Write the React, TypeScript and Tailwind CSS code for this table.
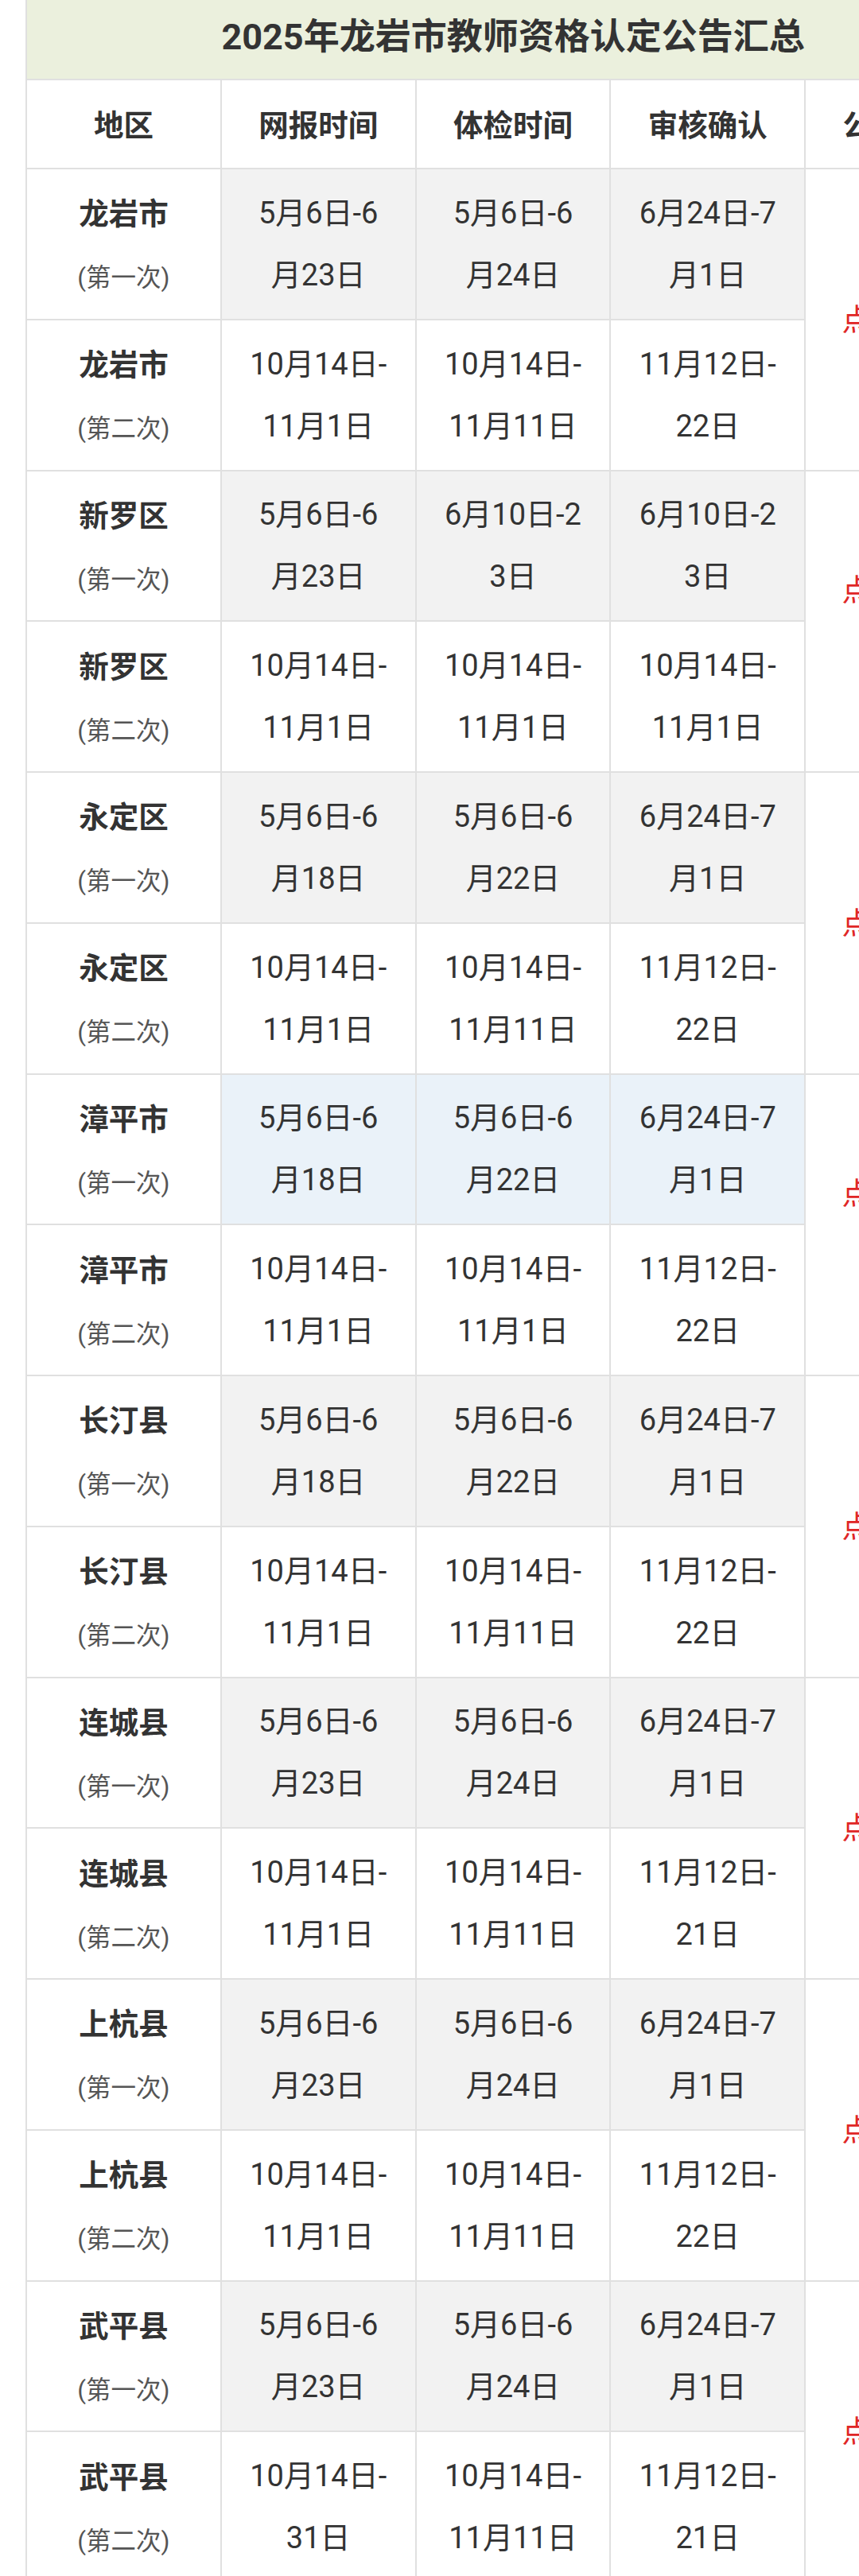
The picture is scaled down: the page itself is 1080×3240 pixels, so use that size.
import React from 'react';

interface Row {
  region: string;
  round: string;
  apply: [string, string];
  exam: [string, string];
  confirm: [string, string];
}

interface Pair {
  rows: [Row, Row];
  link: string[];
  highlight?: boolean;
}

const first = (region: string, apply: [string, string], exam: [string, string], confirm: [string, string]): Row => ({
  region,
  round: '(第一次)',
  apply,
  exam,
  confirm,
});

const second = (region: string, apply: [string, string], exam: [string, string], confirm: [string, string]): Row => ({
  region,
  round: '(第二次)',
  apply,
  exam,
  confirm,
});

const pairs: Pair[] = [
  {
    rows: [
      first('龙岩市', ['5月6日-6', '月23日'], ['5月6日-6', '月24日'], ['6月24日-7', '月1日']),
      second('龙岩市', ['10月14日-', '11月1日'], ['10月14日-', '11月11日'], ['11月12日-', '22日']),
    ],
    link: ['点击查看'],
  },
  {
    rows: [
      first('新罗区', ['5月6日-6', '月23日'], ['6月10日-2', '3日'], ['6月10日-2', '3日']),
      second('新罗区', ['10月14日-', '11月1日'], ['10月14日-', '11月1日'], ['10月14日-', '11月1日']),
    ],
    link: ['点击查看', '公告'],
  },
  {
    rows: [
      first('永定区', ['5月6日-6', '月18日'], ['5月6日-6', '月22日'], ['6月24日-7', '月1日']),
      second('永定区', ['10月14日-', '11月1日'], ['10月14日-', '11月11日'], ['11月12日-', '22日']),
    ],
    link: ['点击查看'],
  },
  {
    rows: [
      first('漳平市', ['5月6日-6', '月18日'], ['5月6日-6', '月22日'], ['6月24日-7', '月1日']),
      second('漳平市', ['10月14日-', '11月1日'], ['10月14日-', '11月1日'], ['11月12日-', '22日']),
    ],
    link: ['点击查看', '公告'],
    highlight: true,
  },
  {
    rows: [
      first('长汀县', ['5月6日-6', '月18日'], ['5月6日-6', '月22日'], ['6月24日-7', '月1日']),
      second('长汀县', ['10月14日-', '11月1日'], ['10月14日-', '11月11日'], ['11月12日-', '22日']),
    ],
    link: ['点击查看'],
  },
  {
    rows: [
      first('连城县', ['5月6日-6', '月23日'], ['5月6日-6', '月24日'], ['6月24日-7', '月1日']),
      second('连城县', ['10月14日-', '11月1日'], ['10月14日-', '11月11日'], ['11月12日-', '21日']),
    ],
    link: ['点击查看'],
  },
  {
    rows: [
      first('上杭县', ['5月6日-6', '月23日'], ['5月6日-6', '月24日'], ['6月24日-7', '月1日']),
      second('上杭县', ['10月14日-', '11月1日'], ['10月14日-', '11月11日'], ['11月12日-', '22日']),
    ],
    link: ['点击查看'],
  },
  {
    rows: [
      first('武平县', ['5月6日-6', '月23日'], ['5月6日-6', '月24日'], ['6月24日-7', '月1日']),
      second('武平县', ['10月14日-', '31日'], ['10月14日-', '11月11日'], ['11月12日-', '21日']),
    ],
    link: ['点击查看'],
  },
];

const headers = ['地区', '网报时间', '体检时间', '审核确认', '公告链接'];

const cell = 'border-2 border-[#e0e0e0] text-center align-middle';

function DateCell({ lines, bg }: { lines: [string, string]; bg: string }) {
  return (
    <td className={`${cell} ${bg} px-[30px] text-[38px] leading-[78px] text-[#333333]`}>
      <div>{lines[0]}</div>
      <div>{lines[1]}</div>
    </td>
  );
}

export default function App() {
  return (
    <div
      className="w-[1080px] min-h-[3240px] overflow-hidden bg-white"
      style={{ fontFamily: 'Roboto, "Noto Sans CJK SC", "Noto Sans", sans-serif' }}
    >
      <table className="ml-[32px] w-[1224px] table-fixed border-collapse">
        <colgroup>
          {headers.map((h) => (
            <col key={h} className="w-[244.8px]" />
          ))}
        </colgroup>
        <thead>
          {/* 标题 */}
          <tr className="h-[100px]">
            <th
              colSpan={5}
              className="border-2 border-t-0 border-[#e0e0e0] bg-[#ebf0dd] pb-[6px] text-center align-middle text-[45px] font-bold text-[#333333]"
            >
              2025年龙岩市教师资格认定公告汇总
            </th>
          </tr>
          <tr className="h-[112px]">
            {headers.map((h) => (
              <th key={h} className={`${cell} bg-white pt-[4px] text-[37.5px] font-bold text-[#333333]`}>
                {h}
              </th>
            ))}
          </tr>
        </thead>
        <tbody>
          {pairs.map((pair) =>
            pair.rows.map((row, i) => {
              const bg = i === 0 ? (pair.highlight ? 'bg-[#eaf2f9]' : 'bg-[#f2f2f2]') : 'bg-white';
              return (
                <tr key={row.region + row.round} className="h-[189.75px]">
                  <td className={`${cell} bg-white leading-[78px]`}>
                    <div className="pt-[3px] text-[37.5px] font-bold text-[#333333]">{row.region}</div>
                    <div className="pt-[6px] text-[31.5px] leading-[72px] text-[#555555]">{row.round}</div>
                  </td>
                  <DateCell lines={row.apply} bg={bg} />
                  <DateCell lines={row.exam} bg={bg} />
                  <DateCell lines={row.confirm} bg={bg} />
                  {i === 0 && (
                    <td
                      rowSpan={2}
                      className={`${cell} bg-white px-[30px] text-[38px] leading-[78px] text-[#e02626]`}
                    >
                      {pair.link.map((l) => (
                        <div key={l}>{l}</div>
                      ))}
                    </td>
                  )}
                </tr>
              );
            })
          )}
        </tbody>
      </table>
    </div>
  );
}
